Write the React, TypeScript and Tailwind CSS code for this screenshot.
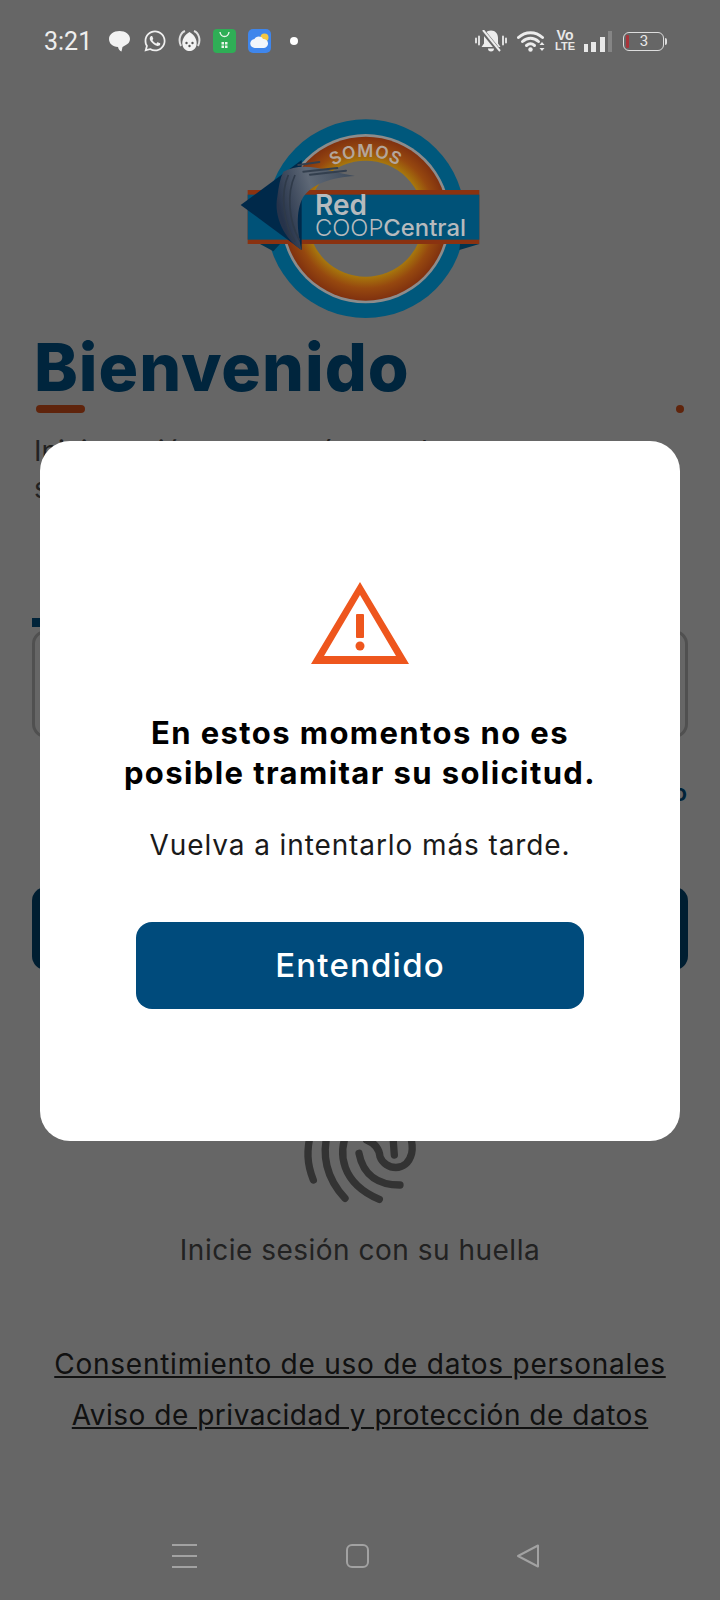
import { FaWhatsapp } from "react-icons/fa";

function BellOff() {
    return (
        <svg viewBox="0 0 32 22" className="w-[32px] h-[22px]" fill="#ececec">
            <path d="M16 .5c-4.500 0-7 3.200-7 7.500v5.500L6.500 17h19L23 13.500V8c0-4.300-2.500-7.500-7-7.500z" />
            <path d="M13 18.500h6a3 3 0 0 1-6 0z" />
            <path d="M7 0l17 21" stroke="#666666" strokeWidth="4.500" />
            <path d="M8 0l17 21" stroke="#ececec" strokeWidth="2" />
            <path d="M1 8.500v4M4 6.500v8M28 6.500v8M31 8.500v4" stroke="#ececec" strokeWidth="1.800" strokeLinecap="round" />
        </svg>
    );
}

function WifiIcon() {
    return (
        <svg viewBox="0 0 29 22" className="w-[29px] h-[22px]" fill="none" stroke="#ececec" strokeLinecap="round">
            <path d="M1.500 7.500c7-6.500 17-6.500 24 0" strokeWidth="3" />
            <path d="M5.500 11.500c4.800-4.300 11.200-4.300 16 0" strokeWidth="3" />
            <path d="M9.500 15.500c2.600-2.200 5.400-2.200 8 0" strokeWidth="3" />
            <circle cx="13.500" cy="19.500" r="2.200" fill="#ececec" stroke="none" />
            <path d="M22.500 15l2.500-3 2.500 3zM22.500 18l2.500 3 2.500-3z" fill="#ececec" stroke="none" />
        </svg>
    );
}

function Logo() {
    return (
        <svg viewBox="60 54 720 606" className="w-[240px] h-[202px] font-['Inter',sans-serif]">
            <defs>
                <radialGradient id="aro" cx="437" cy="356" r="246" gradientUnits="userSpaceOnUse">
                    <stop offset="0.7" stopColor="#a87a0c" />
                    <stop offset="0.85" stopColor="#96480f" />
                    <stop offset="1" stopColor="#80310f" />
                </radialGradient>
                <linearGradient id="plumas" x1="170" y1="300" x2="405" y2="230" gradientUnits="userSpaceOnUse">
                    <stop offset="0" stopColor="#26334a" />
                    <stop offset="0.45" stopColor="#5e6876" />
                    <stop offset="1" stopColor="#3d4a5a" />
                </linearGradient>
                <path id="curva" d="M251 356A186 186 0 0 1 623 356" />
            </defs>
            <circle cx="437" cy="356" r="298" fill="#00587c" />
            <circle cx="437" cy="356" r="254" fill="#8c8c8c" />
            <circle cx="437" cy="356" r="246" fill="url(#aro)" />
            <circle cx="437" cy="356" r="174" fill="#666666" />
            <text fontSize="52" fontWeight="600" fill="#b4a69c" letterSpacing="2" textAnchor="middle">
                <textPath href="#curva" startOffset="50%">SOMOS</textPath>
            </text>
            <path d="M120 432h60l-20 22zM720 432h58l-60 18z" fill="#00344f" />
            <rect x="83" y="270" width="695" height="162" fill="#8a3210" />
            <rect x="83" y="284" width="695" height="135" fill="#005278" />
            <path d="M62 315L245 180V450z" fill="#00294a" />
            <path d="M190 215C250 180 330 215 405 228C340 232 270 250 245 300C225 345 235 410 245 450C195 420 160 350 172 290C176 260 180 235 190 215z" fill="url(#plumas)" />
            <path d="M235 195L298 186M250 215L352 204M270 224L378 212" stroke="#333f4e" strokeWidth="6" strokeLinecap="round" />
            <path d="M205 225C180 280 190 370 225 425M225 225C200 280 205 360 238 420" stroke="#2f3a49" strokeWidth="5" fill="none" />
            <text x="285" y="345" fontSize="84" fontWeight="600" fill="#b6babd">Red</text>
            <text x="285" y="408" fontSize="70" fontWeight="300" fill="#b6babd" textLength="205" lengthAdjust="spacingAndGlyphs">COOP</text>
            <text x="490" y="408" fontSize="68" fontWeight="500" fill="#b6babd" textLength="248" lengthAdjust="spacingAndGlyphs">Central</text>
        </svg>
    );
}

function Fingerprint() {
    return (
        <svg viewBox="0 0 600 300" className="w-[200px] h-[100px] mx-auto" fill="none" stroke="#808080" strokeWidth="22" strokeLinecap="round">
            <path d="M152 40C140 90 140 130 160 180" />
            <path d="M205 30C185 100 195 170 255 235" />
            <path d="M265 30C230 100 245 190 358 238" />
            <path d="M297 100C310 170 360 195 420 195" />
            <path d="M320 60C345 70 358 90 360 110C375 150 440 160 455 100C460 80 455 60 450 40" />
            <path d="M398 40L403 105" />
        </svg>
    );
}

export default function App() {
    return (
        <div className="relative w-[720px] h-[1600px] bg-white overflow-hidden flex flex-col font-['Inter',sans-serif]">
            {/* Dim layer of the dialog */}
            <div className="absolute inset-0 z-10 bg-black/60" />

            {/* Status bar */}
            <div className="relative z-20 h-[82px] shrink-0 pl-[44px] pr-[53px] flex items-center justify-between">
                <div className="flex items-center">
                    <span className="w-[46px] text-[25px] leading-none text-[#eeeeee] font-['Roboto',sans-serif]">3:21</span>
                    <svg viewBox="0 0 21 24" className="ml-[19px] w-[21px] h-[24px]" fill="#f2f2f2">
                        <path d="M10.500 2C16.500 2 21 5.500 21 10c0 3-2 5.200-5 6.500l-2.500 1.500-1 4.500c-1.500-.500-3-2-3.500-4.500C3.500 17.500 0 14.500 0 10 0 5.500 4.500 2 10.500 2z" />
                    </svg>
                    <FaWhatsapp className="ml-[13px] text-[#f0f0f0]" size={24} />
                    <svg viewBox="0 0 23 24" className="ml-[11px] w-[23px] h-[24px]">
                        <path d="M3 17C0 11 2 4 7 2" stroke="#e0e0e0" strokeWidth="2" fill="none" />
                        <path d="M20 17c3-6 1-13-4-15" stroke="#e0e0e0" strokeWidth="2" fill="none" />
                        <path d="M11.500 3c5 3 8 8 7 13-.800 4-4 6-7 6s-6.200-2-7-6c-1-5 2-10 7-13z" fill="#f2f2f2" />
                        <circle cx="8.500" cy="14" r="1.200" fill="#555555" />
                        <circle cx="14.500" cy="14" r="1.200" fill="#555555" />
                        <circle cx="11.500" cy="17" r="1.200" fill="#555555" />
                    </svg>
                    <div className="ml-[12px] w-[23px] h-[24px] rounded-[4px] bg-[#2fae56]">
                        <svg viewBox="0 0 23 24" className="w-full h-full">
                            <path d="M7 3c1 6 8 6 9 0" stroke="#e8f5ea" strokeWidth="1.400" fill="none" />
                            <path d="M8.500 13h2.500v2.500H8.500zM12 13h2.500v2.500H12zM8.500 16.500h2.500V19H8.500zM12 16.500h2.500V19H12z" fill="#e8f5ea" />
                        </svg>
                    </div>
                    <div className="ml-[12px] w-[23px] h-[24px] rounded-[5px] bg-[#3f86ec]">
                        <svg viewBox="0 0 23 24" className="w-full h-full">
                            <circle cx="16.500" cy="8.500" r="4" fill="#f5c842" />
                            <path d="M7 19a4.500 4.500 0 0 1-.500-9c1-3 7-3.500 8.500 0a4.500 4.500 0 0 1 1 9z" fill="#f2f6fb" />
                        </svg>
                    </div>
                    <div className="ml-[19px] w-[8px] h-[8px] rounded-full bg-white" />
                </div>
                <div className="flex items-center">
                    <BellOff />
                    <div className="ml-[10px]">
                        <WifiIcon />
                    </div>
                    <div className="ml-[11px] w-[16px] flex flex-col items-center text-[#e8e8e8] font-bold font-['Liberation_Sans',sans-serif]">
                        <span className="text-[14px] leading-[11px]">Vo</span>
                        <span className="text-[11px] leading-[11px]">LTE</span>
                    </div>
                    <div className="ml-[11px] w-[28px] h-[21px] flex items-end justify-between">
                        <div className="w-[4px] h-[8px] bg-[#e8e8e8]" />
                        <div className="w-[5px] h-[10px] bg-[#e8e8e8]" />
                        <div className="w-[5px] h-[15px] bg-[#e8e8e8]" />
                        <div className="w-[4px] h-[21px] bg-[#858585]" />
                    </div>
                    <div className="ml-[11px] flex items-center">
                        <div className="w-[41px] h-[19px] rounded-[6px] border-[1.5px] border-[#dddddd] flex items-center pl-[2px]">
                            <div className="w-[3px] h-[13px] rounded-[1px] bg-[#a8343a]" />
                            <span className="flex-1 text-center pr-[4px] text-[15px] leading-none text-[#e8e8e8] font-['Roboto',sans-serif]">3</span>
                        </div>
                        <div className="ml-[1px] w-[2px] h-[7px] rounded-r-[2px] bg-[#dddddd]" />
                    </div>
                </div>
            </div>

            {/* Logo */}
            <div className="relative z-20 mt-[36px] mx-auto">
                <Logo />
            </div>

            {/* Login page under the dialog */}
            <h1 className="mt-[15px] ml-[34px] text-[66px] leading-[64px] font-extrabold tracking-[1px] text-[#005c99]">Bienvenido</h1>
            <div className="mt-[6px] pl-[36px] pr-[36px] flex items-center justify-between">
                <div className="w-[49px] h-[8px] rounded-full bg-[#ee5a1e]" />
                <div className="w-[8px] h-[8px] rounded-full bg-[#ee5a1e]" />
            </div>
            <p className="mt-[20px] px-[34px] text-[28px] leading-[37px] text-[#555555] whitespace-nowrap">
                Inicie sesión con su número de cuenta y
                <br />
                su contraseña
            </p>
            <div className="mt-[111px] ml-[32px] w-[300px] h-[9px] bg-[#00588f]" />
            <div className="mt-[3px] mx-[32px] h-[108px] rounded-[14px] border-[3px] border-[#c8c8c8]" />
            <div className="mt-[37px] px-[33px] text-right text-[24px] leading-[36px] font-semibold text-[#00588f]">usuario</div>
            <div className="mt-[76px] mx-[32px] h-[83px] rounded-[14px] bg-[#004b7c]" />
            <div className="mt-[150px]">
                <Fingerprint />
            </div>
            <p className="mt-[12px] text-center text-[28px] leading-[36px] tracking-[0.5px] text-[#555555]">Inicie sesión con su huella</p>
            <a className="mt-[78px] text-center text-[28px] leading-[36px] tracking-[0.75px] text-[#2c2c2c] underline">Consentimiento de uso de datos personales</a>
            <a className="mt-[15px] text-center text-[28px] leading-[36px] tracking-[0.52px] text-[#2c2c2c] underline">Aviso de privacidad y protección de datos</a>

            {/* Navigation bar */}
            <div className="relative z-20 mt-auto h-[88px] shrink-0 pl-[172px] pr-[181px] flex items-center justify-between">
                <div className="w-[25px] h-[24px] flex flex-col justify-between">
                    <div className="h-[2px] bg-[#a2a2a2]" />
                    <div className="h-[2px] bg-[#a2a2a2]" />
                    <div className="h-[2px] bg-[#a2a2a2]" />
                </div>
                <div className="w-[23px] h-[24px] rounded-[6px] border-2 border-[#a2a2a2]" />
                <svg viewBox="0 0 22 24" className="w-[22px] h-[24px]" fill="none" stroke="#a2a2a2" strokeWidth="2" strokeLinejoin="round">
                    <path d="M1 12L21 1.500V22.500z" />
                </svg>
            </div>

            {/* Dialog */}
            <div className="absolute z-30 left-[40px] top-[441px] w-[640px] h-[700px] rounded-[30px] bg-white flex flex-col items-center pt-[141px]">
                <svg viewBox="0 0 98 82" className="w-[98px] h-[82px]">
                    <path fillRule="evenodd" d="M49 0L98 82H0zM49 13L13 74H85z" fill="#ee561d" />
                    <rect x="45" y="32" width="8" height="24" rx="1" fill="#ee561d" />
                    <circle cx="49" cy="64" r="4.500" fill="#ee561d" />
                </svg>
                <h2 className="mt-[49px] text-center text-[31px] leading-[40px] font-bold tracking-[1.4px] text-black">
                    En estos momentos no es
                    <br />
                    posible tramitar su solicitud.
                </h2>
                <p className="mt-[32px] text-[28px] leading-[40px] tracking-[0.9px] text-[#1a1a1a]">Vuelva a intentarlo más tarde.</p>
                <button className="mt-[57px] w-[448px] h-[87px] rounded-[16px] bg-[#004b7c] text-[33px] font-medium tracking-[1.2px] text-white">Entendido</button>
            </div>
        </div>
    );
}
